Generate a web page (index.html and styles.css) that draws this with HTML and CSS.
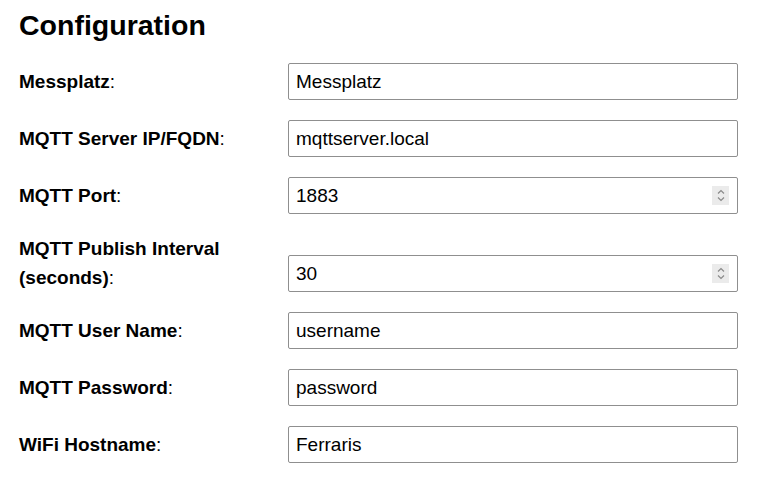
FILE: index.html
```html
<!DOCTYPE html>
<html lang="de">
<head>
<meta charset="utf-8">
<title>Configuration</title>
<link rel="stylesheet" href="styles.css">
</head>
<body>
<main class="page">
  <h1 class="title">Configuration</h1>
  <form class="config">
    <label class="lbl" for="f1"><b>Messplatz</b>:</label>
    <input class="field" id="f1" type="text" value="Messplatz">

    <label class="lbl" for="f2"><b>MQTT Server IP/FQDN</b>:</label>
    <input class="field" id="f2" type="text" value="mqttserver.local">

    <label class="lbl" for="f3"><b>MQTT Port</b>:</label>
    <div class="num">
      <input class="field" id="f3" type="text" value="1883">
      <span class="spin"><svg width="10" height="15" viewBox="0 0 10 15"><path d="M2 5.5 L5 2.5 L8 5.5 M2 9.5 L5 12.5 L8 9.5" fill="none" stroke="#8a8a8a" stroke-width="1.2"/></svg></span>
    </div>

    <label class="lbl" for="f4"><b>MQTT Publish Interval (seconds)</b>:</label>
    <div class="num end">
      <input class="field" id="f4" type="text" value="30">
      <span class="spin"><svg width="10" height="15" viewBox="0 0 10 15"><path d="M2 5.5 L5 2.5 L8 5.5 M2 9.5 L5 12.5 L8 9.5" fill="none" stroke="#8a8a8a" stroke-width="1.2"/></svg></span>
    </div>

    <label class="lbl" for="f5"><b>MQTT User Name</b>:</label>
    <input class="field" id="f5" type="text" value="username">

    <label class="lbl" for="f6"><b>MQTT Password</b>:</label>
    <input class="field" id="f6" type="text" value="password">

    <label class="lbl" for="f7"><b>WiFi Hostname</b>:</label>
    <input class="field" id="f7" type="text" value="Ferraris">
  </form>
</main>
</body>
</html>
```
FILE: styles.css
```css
html, body {
  margin: 0;
  padding: 0;
  background: #ffffff;
}
body {
  font-family: "Liberation Sans", Arial, sans-serif;
  color: #000;
}
.page {
  padding: 0 29px 0 19px;
}
.title {
  margin: 0;
  padding-top: 7px;
  font-size: 28.5px;
  line-height: 36px;
  font-weight: bold;
}
.config {
  display: grid;
  grid-template-columns: 269px 450px;
  row-gap: 20px;
  align-items: center;
  margin-top: 20px;
}
.lbl {
  font-size: 19px;
  line-height: 29px;
  padding-right: 40px;
}
.lbl b {
  font-weight: bold;
}
.field {
  box-sizing: border-box;
  width: 450px;
  height: 37px;
  margin: 0;
  border: 1px solid #8f8f8f;
  border-radius: 2px;
  padding: 0 7px;
  font-family: "Liberation Sans", Arial, sans-serif;
  font-size: 19px;
  color: #000;
  background: #fff;
  display: block;
}
.num {
  position: relative;
}
.num.end {
  align-self: end;
}
.spin {
  position: absolute;
  right: 9px;
  top: 9px;
  width: 17px;
  height: 19px;
  background: #ebebeb;
  display: flex;
  align-items: center;
  justify-content: center;
}
```
